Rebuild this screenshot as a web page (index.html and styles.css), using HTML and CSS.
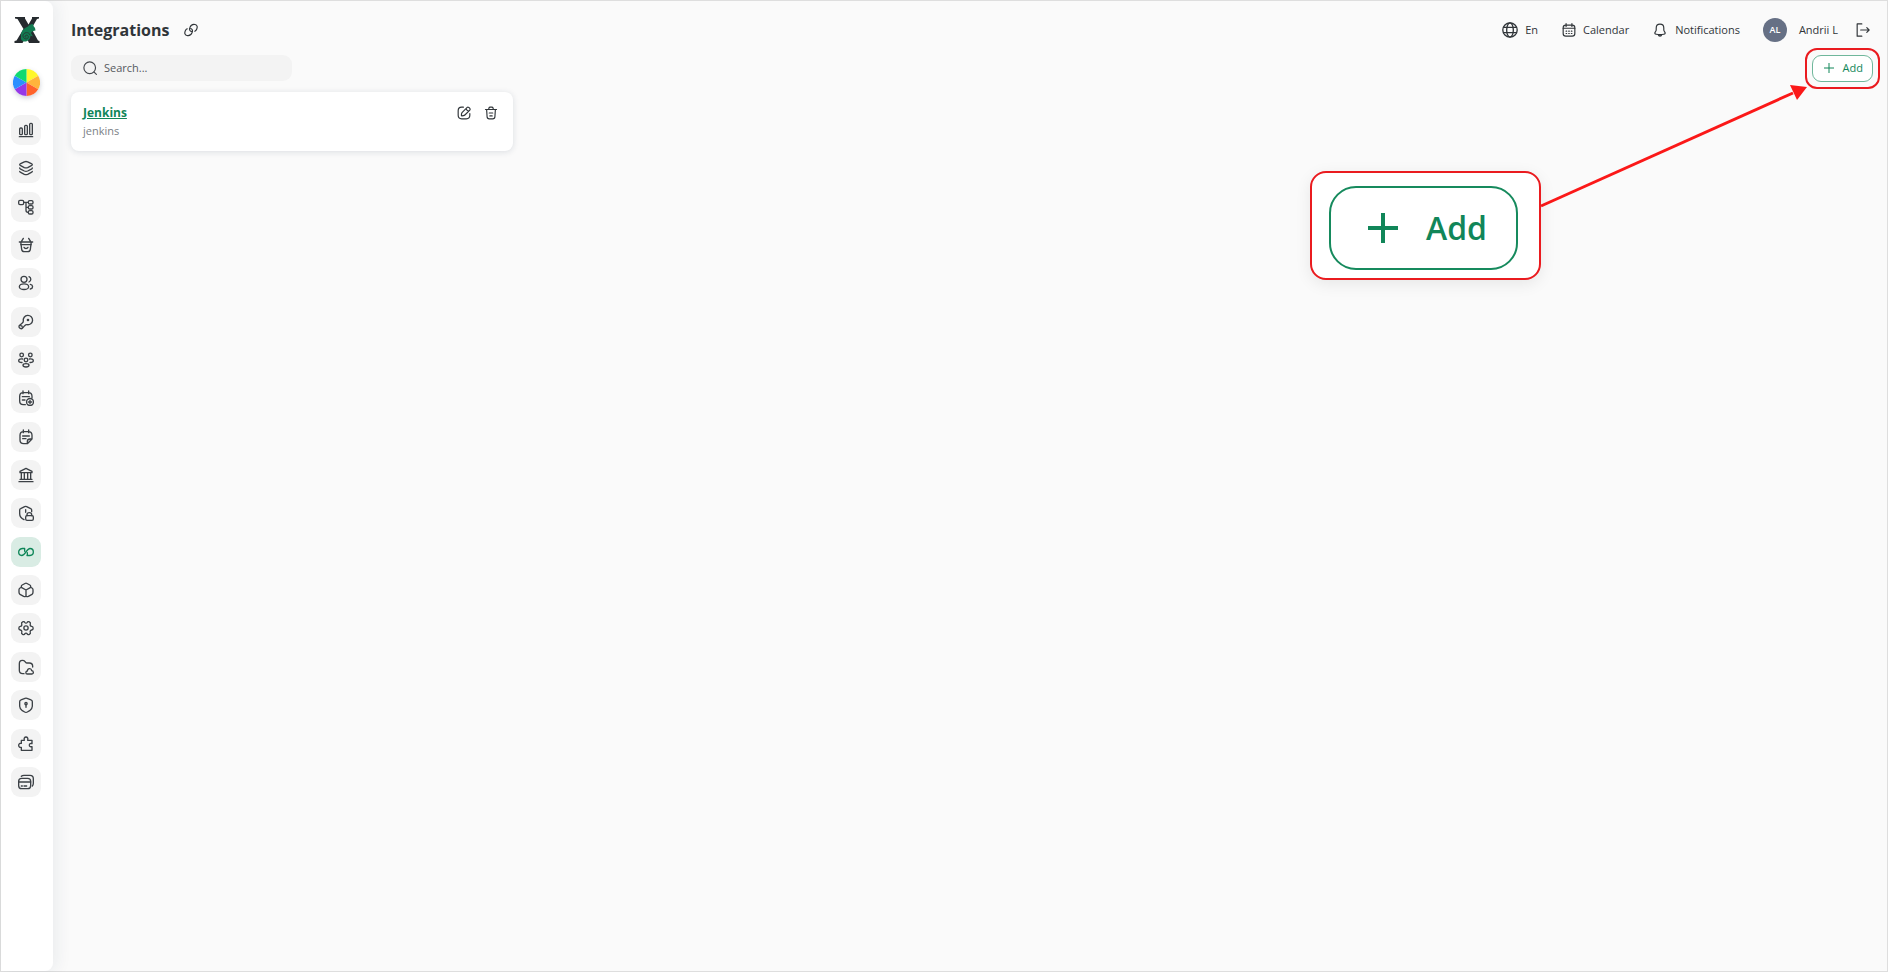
FILE: index.html
```html
<!DOCTYPE html>
<html lang="en">
<head>
<meta charset="utf-8">
<title>Integrations</title>
<link rel="stylesheet" href="styles.css">
</head>
<body>
<div class="app">
  <aside class="sidebar">
    <a class="logo" href="#" aria-label="Home">
      <svg width="26" height="26" viewBox="0 0 26 26">
        <path fill="#262b2f" d="M1 0h10v1.500l3.500 6L18 1.500V0h7v1.500l-2 .5-5.500 9.500 6.500 12 1.500.5v2H15l-3-6.500L8.500 26H.5v-2l2-.5 7-11.500L3.500 2 1 1.500z"/>
        <path fill="#137b52" d="M21.500 13.500c-2 .5-3.500.5-4.500 2.500l2 3.500-2.500-1c0 3.500-2.500 6-5.500 6-3 0-4.500-2-4-4.500C6.500 14 10 11 14 9.500c1-1.500 2.500-2.500 5-2.500l.5 2 1.500 2z"/>
        <path fill="none" stroke="#263b35" stroke-width="1" d="M16 18c-1-3.500-6.500-3-7 .5-.3 3 3.500 4.500 5 2.500 1.200-2-1-3.500-2.400-2.500-1 .8-.4 2 .6 1.700"/>
      </svg>
    </a>
    <a class="wheel" href="#" aria-label="Workspace">
      <svg width="27" height="27" viewBox="-50 -50 100 100">
        <path fill="#fff72b" d="M0 0V-50A50 50 0 0 1 43.300-25z"/>
        <path fill="#ffb43c" d="M0 0 43.300-25A50 50 0 0 1 43.300 25z"/>
        <path fill="#ff632b" d="M0 0 43.300 25A50 50 0 0 1 0 50z"/>
        <path fill="#9538e8" d="M0 0V50A50 50 0 0 1-43.300 25z"/>
        <path fill="#2b8fff" d="M0 0-43.300 25A50 50 0 0 1-43.300-25z"/>
        <path fill="#0fda70" d="M0 0-43.300-25A50 50 0 0 1 0-50z"/>
      </svg>
    </a>
    <nav class="nav" aria-label="Main">
      <a class="nav-item" href="#" aria-label="Dashboards"><svg class="icon" viewBox="0 0 24 24"><path d="M2 22h20"/><rect x="2.500" y="9" width="4" height="10" rx="1.500"/><rect x="10" y="5" width="4" height="14" rx="1.500"/><rect x="17.500" y="2" width="4" height="17" rx="1.500"/></svg></a>
      <a class="nav-item" href="#" aria-label="Layers"><svg class="icon" viewBox="0 0 24 24"><path d="M4 8.500C2 7.500 2 6.500 4 5.500l5.500-2.800q2.500-1 5 0L20 5.500c2 1 2 2 0 3l-5.500 2.800q-2.500 1-5 0zM2.500 12c0 .8.500 1.200 1.500 1.700l5.500 2.800q2.500 1 5 0l5.500-2.800c1-.5 1.500-.9 1.500-1.700M2.500 17c0 .8.500 1.200 1.500 1.700l5.500 2.800q2.500 1 5 0l5.500-2.800c1-.5 1.500-.9 1.500-1.700"/></svg></a>
      <a class="nav-item" href="#" aria-label="Hierarchy"><svg class="icon" viewBox="0 0 24 24"><rect x="1" y="2" width="7.500" height="6.500" rx="2"/><rect x="15.500" y="2.500" width="7" height="5" rx="2"/><rect x="15.500" y="10" width="7" height="5" rx="2"/><rect x="15.500" y="17.500" width="7" height="5" rx="2"/><path d="M8.500 5h7M12 5v12q0 3 3 3M12 12.500h3.500"/></svg></a>
      <a class="nav-item" href="#" aria-label="Services"><svg class="icon" viewBox="0 0 24 24"><path d="M2 7.500h20M4 11.500h16M4.200 8l1.300 10.500Q6 22 9.500 22h5q3.500 0 4-3.500L19.800 8M5 7l3-5M19 7l-3-5M9 15.500c1 2.500 5 2.500 6 0"/></svg></a>
      <a class="nav-item" href="#" aria-label="Users"><svg class="icon" viewBox="0 0 24 24"><circle cx="9" cy="6.500" r="4.500"/><ellipse cx="9" cy="17.500" rx="7" ry="4.300"/><path d="M16.500 2.500a4.300 4.300 0 0 1 0 8M18.500 14c4.500 1 4.500 6 0 7"/></svg></a>
      <a class="nav-item" href="#" aria-label="Keys"><svg class="icon" viewBox="0 0 24 24"><path d="M8 10.500A7 7 0 1 1 13.500 16c-1.500-.2-2.500.5-3.500 1.500l-3.500 4c-1.500 1.500-5.500-.5-5-3 .2-1 1-1.500 2-2.500l3-2.500c1-.8 1.500-1.500 1.500-3z"/><circle cx="15" cy="9" r="1"/><path d="M4 17.500c1.500 0 2.500 1 2.500 2.500"/></svg></a>
      <a class="nav-item" href="#" aria-label="Teams"><svg class="icon" viewBox="0 0 24 24"><circle cx="5.500" cy="4.500" r="2.700"/><circle cx="18.500" cy="4.500" r="2.700"/><circle cx="12" cy="12" r="2.700"/><ellipse cx="12" cy="20" rx="4.500" ry="2.500"/><path d="M7 10.500c-3-.7-6 .5-6 2.500s2.500 3 5 2.700M17 10.500c3-.7 6 .5 6 2.500s-2.500 3-5 2.700"/></svg></a>
      <a class="nav-item" href="#" aria-label="Schedule"><svg class="icon" viewBox="0 0 24 24"><path d="M11 22H8q-5.500 0-5.500-5.500v-7Q2.500 4 8 4h7.500Q21 4 21 9.500V12M7.500 1.500v4M16 1.500v4M6.500 10H17M6.500 15h4"/><circle cx="18" cy="18" r="5.200"/><path d="M18 15.500v5M15.500 18h5"/></svg></a>
      <a class="nav-item" href="#" aria-label="Notes"><svg class="icon" viewBox="0 0 24 24"><path d="M14 22H8.500Q3 22 3 16.500v-7Q3 4 8.500 4h7Q21 4 21 9.500V15zM14 22v-3q0-4 4-4h3M8 1.500v4M16 1.500v4M7 10.500h10M7 14.500h5"/></svg></a>
      <a class="nav-item" href="#" aria-label="Organizations"><svg class="icon" viewBox="0 0 24 24"><path d="M3 8.500v-2L12 2l9 4.500v2zM5 9v9M9.500 9v9M14.500 9v9M19 9v9M3 18.500h18M1.500 22h21"/></svg></a>
      <a class="nav-item" href="#" aria-label="Access"><svg class="icon" viewBox="0 0 24 24"><path d="M9 22C5 20 2.500 17 2.500 13V7.500q0-1.500 1.500-2l6-3q1.500-.7 3 0l6 3q1.500.5 1.500 2V10M11.500 7v4"/><rect x="11.500" y="16" width="11.500" height="7" rx="2"/><path d="M13.500 16v-1.500c0-4 7-4 7 0V16"/></svg></a>
      <a class="nav-item nav-item-active" href="#" aria-label="Integrations" aria-current="page"><svg class="icon" viewBox="0 0 24 24"><path d="M7.500 6.800C4 6.500 1 8.800 1 12s2 5.200 4.500 5.200C11 17.200 13 6.800 18 6.800c3 0 5 2.200 5 5.200s-2 5.200-5 5.200h-4.500M6 6.800h4V11M14 13v4.200h4"/></svg></a>
      <a class="nav-item" href="#" aria-label="Packages"><svg class="icon" viewBox="0 0 24 24"><path d="M5 8V6.500q0-1.300 1.300-2l4.200-2.300q1.500-.8 3 0l4.200 2.300q1.300.7 1.300 2V8L12 12zM5 8l-2 1q-1.500.8-1.500 2.500v4q0 2 1.500 3l5.500 3q3 1.200 3.500-1V12zM19 8l2 1q1.500.8 1.500 2.500v4q0 2-1.500 3l-5.500 3q-3 1.200-3.500-1V12z"/></svg></a>
      <a class="nav-item" href="#" aria-label="Settings"><svg class="icon" viewBox="0 0 24 24"><circle cx="12" cy="12" r="3.200"/><path d="M10 3.500q2 2.500 4 0c1-2.500 5.500 0 4.500 2.500q-1 3 2 3.500c3 .5 3 5 0 5.500q-3 .5-2 3.500c1 2.500-3.500 5-4.500 2.500q-2-2.500-4 0c-1 2.500-5.500 0-4.500-2.500q1-3-2-3.500c-3-.5-3-5 0-5.500q3-.5 2-3.500C4.500 3.500 9 1 10 3.500z"/></svg></a>
      <a class="nav-item" href="#" aria-label="Files"><svg class="icon" viewBox="0 0 24 24"><path d="M9 22H7q-5 0-5-5V7q0-5 4.500-5 2.500 0 3.500 1.300L11.500 5q.7 1 2 1H17q5 0 5 5v1M14 22.500c-3 0-3-4 0-4.500.5-4.500 6-4.500 6.500-.5 3 0 3.500 5 .5 5z"/></svg></a>
      <a class="nav-item" href="#" aria-label="Security"><svg class="icon" viewBox="0 0 24 24"><path d="m13.500 2 6 2.300Q21.500 5 21.500 7v7c0 3-2 5-4 6.500l-3.500 2q-2 1-4 0l-3.500-2c-2-1.500-4-3.500-4-6.500V7q0-2 2-2.700L10.500 2q1.500-.5 3 0z"/><circle cx="12" cy="10" r="1.700"/><path d="M12 12v3.500"/></svg></a>
      <a class="nav-item" href="#" aria-label="Plugins"><svg class="icon" viewBox="0 0 24 24"><path d="M5 6.500h4.500c-1-3 .5-5 2.500-5s3.500 2 2.500 5H21v5c-3-.8-4 .5-4 2.200s1 3 4 2.200v5.600H5V17c-2.500.5-4-1-4-3s1.500-3.500 4-3z"/></svg></a>
      <a class="nav-item" href="#" aria-label="Billing"><svg class="icon" viewBox="0 0 24 24"><rect x="1" y="6.500" width="18" height="15.500" rx="4.500"/><path d="M1 12h18M5 18h1.500M9 18h4M5 3.500Q6.500 2 9 2h9q5 0 5 5v7q0 2.500-1.500 4"/></svg></a>
    </nav>
  </aside>

  <main class="main">
    <header class="header">
      <div class="title-group">
        <h1 class="title">Integrations</h1>
        <button class="icon-button" type="button" aria-label="Copy link"><svg class="icon-small" viewBox="0 0 24 24"><path d="M10 9.500c3.500-.5 5.500 3 4 6.500-1.500 4-5 6.500-9 5.500S.5 17 2.500 13q1-2 3-3M14 14.500c-3.500.5-5.500-3-4-6.500 1.500-4 5-6.500 9-5.500s4.500 4.500 2.500 8.500q-1 2-3 3"/></svg></button>
      </div>
      <div class="actions">
        <button class="action language" type="button"><svg class="globe" viewBox="0 0 24 24"><circle cx="12" cy="12" r="10.800"/><ellipse cx="12" cy="12" rx="5" ry="10.800"/><path d="M2.500 8h19M2.500 16h19"/></svg>En</button>
        <button class="action calendar" type="button"><svg class="icon-small" viewBox="0 0 24 24"><rect x="2" y="3.500" width="20" height="19" rx="4.500"/><path d="M7 1v5M17 1v5M2 9h20M7 14h1M11.500 14h1M16 14h1M7 18h1M11.500 18h1M16 18h1"/></svg>Calendar</button>
        <button class="action notifications" type="button"><svg class="icon-small" viewBox="0 0 24 24"><path d="M12 2c-4 0-6.500 3-6.500 6.500v3q0 1.500-1 3l-1 1.500c-1 2 0 3 2 3.300q6.500 1.200 13 0c2-.3 3-1.300 2-3.300l-1-1.500q-1-1.500-1-3v-3C18.500 5 16 2 12 2zM9 20c.5 3.500 5.500 3.500 6 0"/></svg>Notifications</button>
        <button class="action user" type="button"><span class="avatar">AL</span>Andrii L</button>
        <button class="icon-button" type="button" aria-label="Log out"><svg class="icon-small" viewBox="0 0 24 24"><path d="M10 1.500H2v21h8M8 12h14.500M18.500 8l4 4-4 4"/></svg></button>
      </div>
    </header>

    <div class="toolbar">
      <label class="search">
        <svg class="search-icon" viewBox="0 0 24 24"><circle cx="11.500" cy="11.500" r="10"/><path d="m19 19 4 4"/></svg>
        <input class="search-input" type="text" placeholder="Search..." aria-label="Search">
      </label>
      <div class="add-wrap">
        <button class="add" type="button"><svg class="plus" viewBox="0 0 10 10"><path d="M5 0v10M0 5h10"/></svg>Add</button>
        <span class="highlight"></span>
      </div>
    </div>

    <section class="cards">
      <article class="card">
        <div class="card-text">
          <a class="card-title" href="#">Jenkins</a>
          <p class="card-type">jenkins</p>
        </div>
        <div class="card-actions">
          <button class="icon-button" type="button" aria-label="Edit"><svg class="icon-small" viewBox="0 0 24 24"><path d="M11 2H8Q2 2 2 8v8q0 6 6 6h8q6 0 6-6v-3M17.500 2.500 9 11q-1 1-1.200 2.500L7.500 16c0 .8.300 1 1 1l2.500-.4q1.500-.2 2.500-1.200L22 7c2-2-2.500-6.500-4.500-4.500zM15.500 4.500q1 3 4 4"/></svg></button>
          <button class="icon-button" type="button" aria-label="Delete"><svg class="icon-small" viewBox="0 0 24 24"><path d="M2.500 6h19M8 5.500l.5-2Q9 2 10.500 2h3q1.500 0 2 1.500l.5 2M4.500 6l.8 12.500Q5.500 22 9 22h6q3.500 0 3.700-3.500L19.500 6M9 12h6M10 17h4"/></svg></button>
        </div>
      </article>
    </section>
  </main>

  <svg class="arrow" width="270" height="126" viewBox="0 0 270 126" aria-hidden="true"><path d="M2 122 254 9" fill="none" stroke="#fb1818" stroke-width="3"/><path d="M268 3 251 1l7 15z" fill="#fb1818"/></svg>
  <div class="callout">
    <button class="add-large" type="button"><svg class="plus-large" viewBox="0 0 30 30"><path d="M15 0v30M0 15h30"/></svg>Add</button>
  </div>
</div>
</body>
</html>
```
FILE: styles.css
```css
* {
  box-sizing: border-box;
}

body {
  margin: 0;
  font-family: "Open Sans", "Noto Sans", sans-serif;
  color: #303539;
  background: #fafafa;
}

button {
  padding: 0;
  border: 0;
  background: none;
  color: inherit;
  font: inherit;
  cursor: pointer;
}

svg {
  display: block;
  flex: none;
}

.app {
  position: relative;
  display: flex;
  min-height: 100vh;
  border: 1px solid #dedede;
}

.sidebar {
  display: flex;
  flex-direction: column;
  align-items: center;
  flex: none;
  width: 52px;
  padding: 16px 2px 0 0;
  background: #fff;
  border-radius: 0 8px 8px 0;
  box-shadow: 4px 0 16px rgba(30, 50, 80, 0.07);
}

.logo {
  margin-left: 2px;
}

.wheel {
  margin-top: 26px;
  border-radius: 50%;
  box-shadow: 0 2px 5px rgba(60, 70, 100, 0.25);
}

.nav {
  display: flex;
  flex-direction: column;
  justify-content: space-between;
  height: 682px;
  margin-top: 19px;
}

.nav-item {
  display: grid;
  place-items: center;
  width: 30px;
  height: 30px;
  border-radius: 9px;
  background: #f3f3f3;
  color: #3c4146;
}

.nav-item-active {
  background: #d9ece4;
  color: #0e8658;
}

.icon,
.icon-small,
.globe,
.search-icon {
  fill: none;
  stroke: currentColor;
  stroke-width: 2;
  stroke-linecap: round;
  stroke-linejoin: round;
}

.icon {
  width: 16px;
  height: 16px;
}

.icon-small {
  width: 14px;
  height: 14px;
}

.globe {
  width: 16px;
  height: 16px;
}

.main {
  flex: 1;
  min-width: 0;
  padding: 14px 14px 16px 18px;
}

.header,
.title-group,
.actions,
.action,
.toolbar,
.search,
.add,
.card-actions {
  display: flex;
  align-items: center;
}

.header {
  justify-content: space-between;
  height: 30px;
}

.title-group {
  gap: 15px;
}

.title {
  margin: 0;
  font-size: 16px;
  line-height: 24px;
  font-weight: 700;
}

.actions {
  height: 28px;
  padding-right: 3px;
  font-size: 11px;
  line-height: 16px;
  font-weight: 500;
}

.action {
  gap: 7px;
}

.language,
.calendar {
  margin-right: 24px;
}

.notifications {
  gap: 8px;
  margin-right: 23px;
}

.user {
  gap: 12px;
  margin-right: 18px;
}

.avatar {
  display: grid;
  place-items: center;
  width: 24px;
  height: 24px;
  border-radius: 50%;
  background: #667085;
  color: #fff;
  font-size: 9px;
  line-height: 12px;
  font-weight: 600;
}

.toolbar {
  justify-content: space-between;
  height: 28px;
  margin-top: 9px;
}

.search {
  gap: 7px;
  width: 221px;
  height: 26px;
  padding: 0 12px;
  border-radius: 9px;
  background: #f3f3f3;
}

.search-icon {
  width: 14px;
  height: 14px;
  color: #45494e;
}

.search-input {
  flex: 1;
  min-width: 0;
  padding: 0;
  border: 0;
  outline: 0;
  background: none;
  color: #45494e;
  font: 11px/16px "Open Sans", "Noto Sans", sans-serif;
}

.search-input::placeholder {
  color: #55595e;
  opacity: 1;
}

.add-wrap {
  position: relative;
}

.add {
  gap: 9px;
  height: 27px;
  padding: 0 9px 0 11px;
  border: 1px solid #6fb79b;
  border-radius: 9px;
  background: #fff;
  color: #118659;
  font-size: 11px;
  line-height: 16px;
  font-weight: 500;
}

.plus {
  width: 10px;
  height: 10px;
  stroke: currentColor;
  stroke-width: 1;
}

.highlight {
  position: absolute;
  inset: -7px;
  border: 2px solid #ea1b1f;
  border-radius: 12px;
  pointer-events: none;
}

.cards {
  display: grid;
  grid-template-columns: repeat(4, 1fr);
  gap: 12px;
  margin-top: 10px;
}

.card {
  display: flex;
  justify-content: space-between;
  padding: 11px 15px 11px 12px;
  border-radius: 8px;
  background: #fff;
  box-shadow: 0 1px 6px rgba(30, 50, 80, 0.14);
}

.card-title {
  display: block;
  color: #118659;
  font-size: 12px;
  line-height: 19px;
  font-weight: 700;
}

.card-type {
  margin: 0;
  color: #7b7f86;
  font-size: 11px;
  line-height: 18px;
}

.card-actions {
  gap: 13px;
  height: 20px;
}

.arrow {
  position: absolute;
  top: 83px;
  right: 78px;
}

.callout {
  position: absolute;
  top: 170px;
  right: 346px;
  padding: 13px 21px 8px 17px;
  border: 2px solid #ea1b1f;
  border-radius: 16px;
  background: #fff;
  box-shadow: 0 4px 16px rgba(0, 0, 0, 0.08);
}

.add-large {
  display: flex;
  align-items: center;
  gap: 28px;
  height: 84px;
  padding: 0 29px 0 37px;
  border: 2px solid #168a5d;
  border-radius: 27px;
  color: #118659;
  font-size: 32px;
  line-height: 40px;
  font-weight: 600;
}

.plus-large {
  width: 30px;
  height: 30px;
  stroke: currentColor;
  stroke-width: 4;
}
```
